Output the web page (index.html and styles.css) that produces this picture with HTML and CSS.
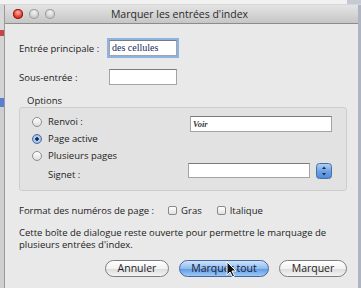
FILE: index.html
```html
<!DOCTYPE html>
<html lang="fr">
<head>
    <meta charset="UTF-8">
    <meta name="viewport" content="width=device-width, initial-scale=1.0">
    <title>Marquer les entrées d'index</title>
    <link rel="stylesheet" href="styles.css">
</head>
<body>
    <div class="desk-top"></div>
    <div class="desk">
        <div class="desk-left"></div>

        <div class="window">
            <div class="titlebar">
                <div class="lights">
                    <span class="light close"></span>
                    <span class="light"></span>
                    <span class="light"></span>
                </div>
                <div class="title">Marquer les entrées d'index</div>
            </div>

            <div class="content">
                <div class="field-row">
                    <span class="field-label">Entrée principale :</span>
                    <div class="input focus">des cellules</div>
                </div>
                <div class="field-row second">
                    <span class="field-label">Sous-entrée :</span>
                    <div class="input"></div>
                </div>

                <div class="group-title">Options</div>
                <div class="group">
                    <div class="opt-row">
                        <div class="opt"><span class="radio"></span>Renvoi :</div>
                        <div class="input voir">Voir</div>
                    </div>
                    <div class="opt-row">
                        <div class="opt"><span class="radio on"></span>Page active</div>
                    </div>
                    <div class="opt-row">
                        <div class="opt"><span class="radio"></span>Plusieurs pages</div>
                    </div>
                    <div class="opt-row last">
                        <div class="opt signet">Signet :</div>
                        <div class="signet-field">
                            <div class="input"></div>
                            <span class="stepper">
                                <svg width="16" height="16" viewBox="0 0 16 16">
                                    <defs>
                                        <linearGradient id="stepBlue" x1="0" y1="0" x2="0" y2="1">
                                            <stop offset="0" stop-color="#b4d3f6"/>
                                            <stop offset="0.5" stop-color="#6ea4e6"/>
                                            <stop offset="1" stop-color="#4d8ad8"/>
                                        </linearGradient>
                                    </defs>
                                    <rect x="0.5" y="0.5" width="15" height="15" rx="3" fill="url(#stepBlue)" stroke="#4a6ea3"/>
                                    <path d="M8 3.5 L10 6 L6 6 Z" fill="#1f2c45"/>
                                    <path d="M8 12.5 L10 10 L6 10 Z" fill="#1f2c45"/>
                                </svg>
                            </span>
                        </div>
                    </div>
                </div>

                <div class="format-row">
                    <span class="format-label">Format des numéros de page :</span>
                    <span class="check"></span><span class="check-label">Gras</span>
                    <span class="check"></span><span class="check-label">Italique</span>
                </div>

                <p class="note">Cette boîte de dialogue reste ouverte pour permettre le marquage de plusieurs entrées d'index.</p>

                <div class="buttons">
                    <button class="btn cancel">Annuler</button>
                    <button class="btn default">Marquer tout</button>
                    <button class="btn mark">Marquer</button>
                    <svg class="cursor" width="11" height="17" viewBox="0 0 11 17">
                        <path d="M1 1 L1 14 L4 11 L6.5 16 L8.5 15 L6 10 L10 10 Z" fill="#111" stroke="#fff" stroke-width="1"/>
                    </svg>
                </div>
            </div>
        </div>

        <div class="desk-right"></div>
    </div>
</body>
</html>
```

FILE: styles.css
```css
body {
    margin: 0;
    background-color: #ffffff;
    font-family: "Open Sans", "DejaVu Sans", sans-serif;
    font-size: 9.5px;
    color: #222222;
}

.desk-top {
    height: 4px;
    background: linear-gradient(to right, #f2f2f2 0, #f2f2f2 96%, #c4cad3 96%);
    border-bottom: 1px solid #d6d6d6;
}

.desk {
    display: flex;
}

.desk-left {
    width: 4px;
    background: linear-gradient(to bottom, #d8d8d8 0, #d8d8d8 9%, #c24848 9%, #c24848 11%, #d4d4d4 11%, #d4d4d4 33%, #5a7fd0 33%, #5a7fd0 36%, #cfcfcf 36%);
    border-right: 1px solid #9a9a9a;
}

.desk-right {
    width: 3px;
    background-color: #aeb5c0;
}

.window {
    flex: 1;
    background-color: #e9e9e9;
}

/* barre de titre */
.titlebar {
    height: 18px;
    position: relative;
    display: flex;
    align-items: center;
    justify-content: center;
    background: linear-gradient(to bottom, #e4e4e4, #c6c6c6);
    border-bottom: 1px solid #8c8c8c;
}

.lights {
    position: absolute;
    left: 8px;
    top: 4px;
    display: flex;
    gap: 6px;
}

.light {
    width: 10px;
    height: 10px;
    border-radius: 50%;
    background: radial-gradient(circle at 50% 35%, #f4f4f4, #c2c2c2 70%, #a6a6a6);
    box-shadow: inset 0 0 0 1px #9d9d9d;
}

.light.close {
    background: radial-gradient(circle at 50% 35%, #ffb3a8, #e23a2a 55%, #9e1a10);
    box-shadow: inset 0 0 0 1px #8a1d14;
}

.title {
    font-size: 10.5px;
    color: #2a2a2a;
    margin-left: -4px;
}

/* contenu */
.content {
    padding: 16px 11px 11px 14px;
}

.field-row {
    display: flex;
    align-items: center;
    height: 16px;
}

.field-row.second {
    margin-top: 13px;
}

.field-label {
    width: 90px;
}

.input {
    box-sizing: border-box;
    height: 16px;
    width: 68px;
    background-color: #ffffff;
    border: 1px solid #a4a4a4;
    border-top-color: #7b7b7b;
    font-family: "Liberation Serif", serif;
    font-size: 10px;
    line-height: 14px;
    padding-left: 2px;
}

.input.focus {
    box-shadow: 0 0 0 2px #8cb3e6;
    color: #1a2c5a;
}

.group-title {
    margin-top: 10px;
    margin-left: 8px;
    line-height: 12px;
}

.group {
    box-sizing: border-box;
    height: 84px;
    padding: 5px 14px 0 12px;
    background-color: #e2e2e2;
    border: 1px solid #cdcdcd;
    border-radius: 3px;
}

.opt-row {
    display: flex;
    height: 17px;
    align-items: center;
}

.opt-row.last {
    align-items: flex-start;
    height: 18px;
}

.opt {
    width: 158px;
    display: flex;
    align-items: center;
}

.opt.signet {
    padding-left: 16px;
    padding-top: 4px;
    width: 142px;
}

.radio {
    box-sizing: border-box;
    width: 10px;
    height: 10px;
    border-radius: 50%;
    margin-right: 6px;
    background: linear-gradient(to bottom, #ffffff, #dedede);
    border: 1px solid #8e8e8e;
}

.radio.on {
    background: radial-gradient(circle, #1b2a44 0, #1b2a44 1.5px, #bcd6f4 2px, #6d9fe0 100%);
    border-color: #4e6ea0;
}

.input.voir {
    width: 142px;
    align-self: flex-start;
    margin-top: 3px;
    font-style: italic;
    font-weight: bold;
    font-size: 8.5px;
    color: #3a3a3a;
}

.signet-field {
    display: flex;
    gap: 6px;
    margin-left: -2px;
    margin-top: -1px;
}

.signet-field .input {
    width: 122px;
    height: 15px;
}

.stepper {
    display: flex;
    height: 16px;
}

/* format */
.format-row {
    margin-top: 13px;
    display: flex;
    align-items: center;
    height: 12px;
}

.format-label {
    margin-right: 14px;
}

.check {
    box-sizing: border-box;
    width: 9px;
    height: 9px;
    border: 1px solid #8a8a8a;
    border-radius: 2px;
    background: linear-gradient(to bottom, #ffffff, #e0e0e0);
    margin-right: 4px;
}

.check-label {
    margin-right: 15px;
}

.note {
    margin: 11px 0 0 0;
    line-height: 12px;
    width: 320px;
}

/* boutons */
.buttons {
    position: relative;
    margin-top: 9px;
    display: flex;
    justify-content: flex-end;
    gap: 10px;
}

.btn {
    height: 17px;
    padding: 0;
    border-radius: 9px;
    border: 1px solid #7e7e7e;
    background: linear-gradient(to bottom, #ffffff 0, #f2f2f2 50%, #dcdcdc 51%, #f4f4f4 100%);
    font-family: "Open Sans", "DejaVu Sans", sans-serif;
    font-size: 10.5px;
    color: #1c1c1c;
    line-height: 15px;
}

.btn.cancel {
    width: 64px;
}

.btn.default {
    width: 90px;
    border-color: #4468a0;
    background: linear-gradient(to bottom, #cfe3fa 0, #8fbcef 50%, #5e99e2 51%, #9cc8f4 100%);
    color: #16223a;
}

.btn.mark {
    width: 68px;
}

.cursor {
    position: absolute;
    left: 207px;
    top: 1px;
}
```
